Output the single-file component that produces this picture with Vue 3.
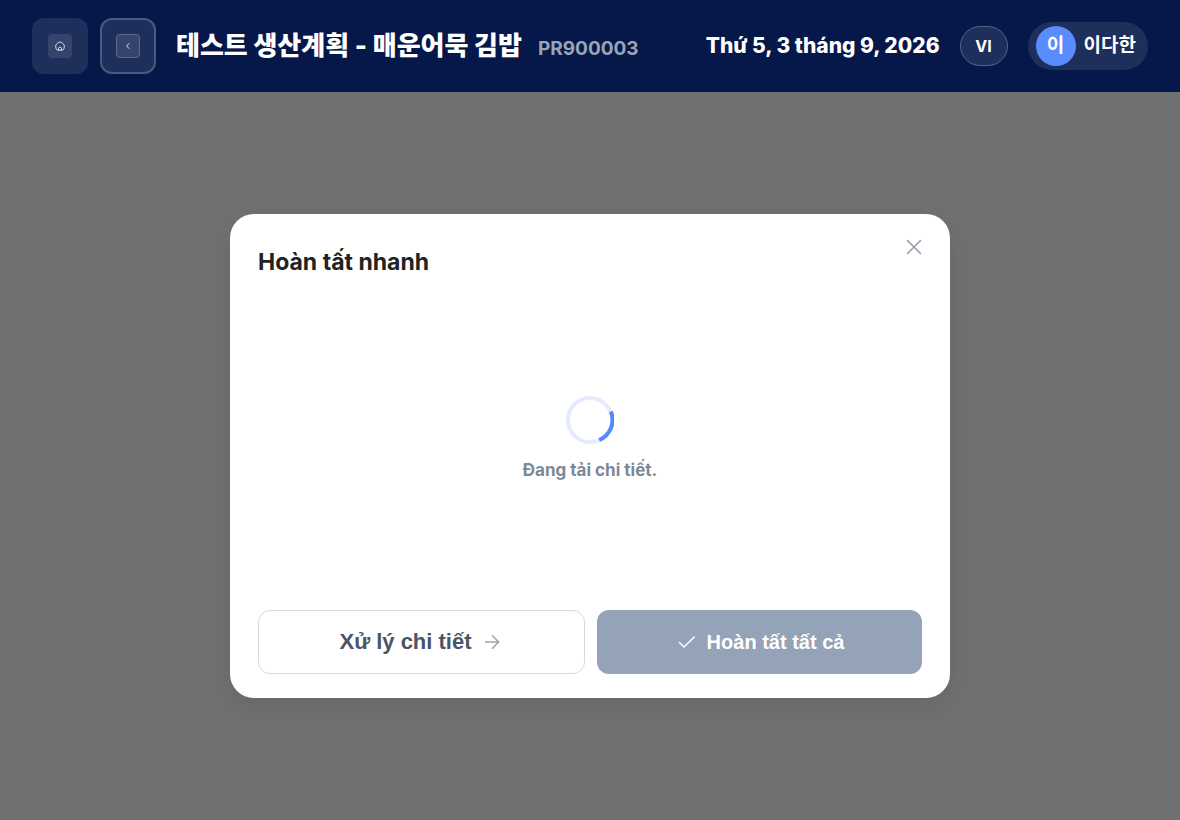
<script setup>
const title = '테스트 생산계획 - 매운어묵 김밥'
const code = 'PR900003'
const today = 'Thứ 5, 3 tháng 9, 2026'
const user = '이다한'
</script>

<template>
  <div class="page">
    <header class="topbar">
      <nav class="nav">
        <button class="nav-btn" type="button" aria-label="Home">
          <span class="nav-icon">
            <svg width="12" height="12" viewBox="0 0 12 12" aria-hidden="true">
              <path d="M3.5 10Q2.4 9.800 2.100 8.800L1.700 6.200Q1.600 5 2.500 4.200L4.300 2.600Q6 1.300 7.700 2.600L9.500 4.200Q10.400 5 10.300 6.200L9.900 8.800Q9.600 9.800 8.500 10ZM4.500 10V8.500Q4.600 7.200 6 7.200T7.500 8.500V10" />
            </svg>
          </span>
        </button>
        <button class="nav-btn outlined" type="button" aria-label="Back">
          <span class="nav-icon">
            <svg width="10" height="10" viewBox="0 0 10 10" aria-hidden="true">
              <path d="M6 2.5 3.7 5 6 7.5" />
            </svg>
          </span>
        </button>
      </nav>
      <div class="heading">
        <h1>{{ title }}</h1>
        <span class="code">{{ code }}</span>
      </div>
      <time class="date" datetime="2026-09-03">{{ today }}</time>
      <button class="lang" type="button">VI</button>
      <button class="user" type="button">
        <span class="avatar">{{ user[0] }}</span>
        <span>{{ user }}</span>
      </button>
    </header>

    <main class="overlay">
      <section class="dialog" role="dialog" aria-modal="true" aria-labelledby="dialog-title">
        <div class="dialog-head">
          <h2 id="dialog-title">Hoàn tất nhanh</h2>
          <button class="close" type="button" aria-label="Close">
            <svg width="16" height="16" viewBox="0 0 16 16" aria-hidden="true">
              <path d="M1.5 1.5 14.5 14.5M14.5 1.5 1.5 14.5" />
            </svg>
          </button>
        </div>
        <div class="loading" role="status">
          <svg class="spinner" width="48" height="48" viewBox="0 0 48 48" aria-hidden="true">
            <circle class="track" cx="24" cy="24" r="22" />
            <path class="arc" d="M44.9 15.5A22 22 0 0 1 33.2 44" />
          </svg>
          <p>Đang tải chi tiết.</p>
        </div>
        <div class="actions">
          <button class="btn detail" type="button">
            <span>Xử lý chi tiết</span>
            <svg width="24" height="24" viewBox="0 0 24 24" aria-hidden="true">
              <path d="M5.5 12H18.5M12.5 5.800 18.700 12 12.500 18.200" />
            </svg>
          </button>
          <button class="btn complete" type="button" disabled>
            <svg width="24" height="24" viewBox="0 0 24 24" aria-hidden="true">
              <path d="M4.500 12.500 9 17 19.300 7" />
            </svg>
            <span>Hoàn tất tất cả</span>
          </button>
        </div>
      </section>
    </main>
  </div>
</template>

<style>
body {
  margin: 0;
}
</style>

<style scoped>
.page {
  display: flex;
  flex-direction: column;
  min-height: 100vh;
  background: #6f7072;
  font-family: Inter, "Noto Sans CJK KR", sans-serif;
}
.page *,
.page {
  box-sizing: border-box;
}
button {
  font: inherit;
  padding: 0;
  border: 0;
}
h1,
h2,
p {
  margin: 0;
}
svg {
  display: block;
  flex: none;
  fill: none;
  stroke: currentColor;
  stroke-linecap: round;
  stroke-linejoin: round;
}
.topbar {
  display: flex;
  align-items: center;
  gap: 20px;
  padding: 18px 32px;
  background: #051849;
  color: #fff;
  white-space: nowrap;
}
.nav {
  display: flex;
  gap: 12px;
}
.nav-btn {
  display: grid;
  place-items: center;
  width: 56px;
  height: 56px;
  border-radius: 12px;
  background: #1e2f5b;
  color: #dde1ea;
}
.nav-icon {
  display: grid;
  place-items: center;
  width: 24px;
  height: 24px;
  border-radius: 4px;
  background: #35446c;
}
.outlined {
  border: 2px solid #4b597d;
}
.outlined .nav-icon {
  border: 1px solid #5d6a8a;
}
.heading {
  display: flex;
  flex: 1;
  align-items: baseline;
  gap: 16px;
  min-width: 0;
}
h1 {
  font-size: 26px;
  line-height: 36px;
  font-weight: 800;
}
.code {
  font-size: 19px;
  font-weight: 700;
  color: #9ba3b6;
}
.date {
  font-size: 21px;
  line-height: 28px;
  font-weight: 800;
}
.lang {
  width: 48px;
  height: 40px;
  border: 1px solid #56638a;
  border-radius: 20px;
  background: #1e2f5b;
  color: #fff;
  font-size: 16px;
  font-weight: 700;
}
.user {
  display: flex;
  align-items: center;
  gap: 8px;
  height: 48px;
  padding: 0 12px 0 8px;
  border-radius: 24px;
  background: #1e2f5b;
  color: #fff;
  font-size: 19px;
  line-height: 28px;
  font-weight: 700;
}
.avatar {
  width: 40px;
  height: 40px;
  border-radius: 50%;
  background: #5b8cff;
  line-height: 40px;
  text-align: center;
}
.overlay {
  display: grid;
  flex: 1;
  place-items: center;
  padding: 24px;
}
.dialog {
  width: 100%;
  max-width: 720px;
  padding: 24px 28px;
  border-radius: 24px;
  background: #fff;
  box-shadow: 0 8px 24px rgba(0, 0, 0, 0.08);
}
.dialog-head {
  display: flex;
  justify-content: space-between;
  align-items: flex-start;
}
h2 {
  padding-top: 8px;
  font-size: 23px;
  line-height: 32px;
  font-weight: 700;
  color: #222;
}
.close {
  padding: 1px 0;
  background: none;
  color: #9299a8;
}
.close svg {
  stroke-width: 1.5;
}
.loading {
  display: flex;
  flex-direction: column;
  align-items: center;
  justify-content: center;
  gap: 12px;
  min-height: 332px;
  padding-bottom: 8px;
  color: #7e8796;
}
.loading p {
  font-size: 17px;
  line-height: 28px;
  font-weight: 700;
}
.spinner {
  stroke-width: 4;
}
.track {
  stroke: #e4ebff;
}
.arc {
  stroke: #5788fb;
  stroke-linecap: butt;
}
.actions {
  display: flex;
  gap: 12px;
}
.btn {
  display: flex;
  flex: 1;
  align-items: center;
  justify-content: center;
  gap: 8px;
  height: 64px;
  border-radius: 12px;
  font-family: "Liberation Sans", Arial, sans-serif;
  font-weight: 700;
}
.detail {
  border: 1px solid #d7d9e6;
  background: #fff;
  color: #4a5565;
  font-size: 22px;
}
.detail svg {
  color: #9aa1ae;
  stroke-width: 1.5;
}
.complete {
  background: #95a3b9;
  color: #fff;
  font-size: 20px;
}
.complete svg {
  stroke-width: 1.5;
}
</style>
